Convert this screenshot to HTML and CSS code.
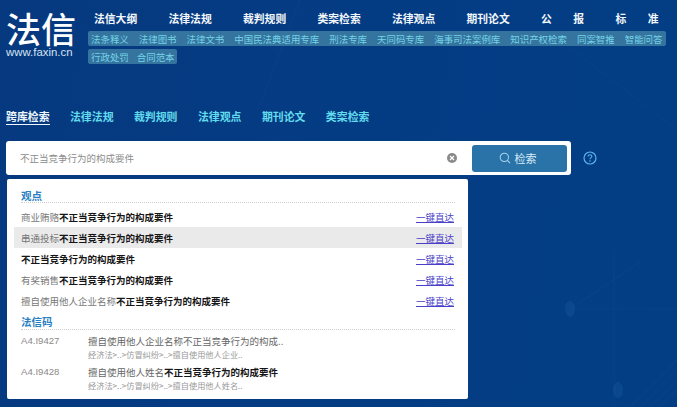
FILE: index.html
```html
<!DOCTYPE html>
<html lang="zh-CN">
<head>
<meta charset="utf-8">
<title>法信</title>
<link rel="stylesheet" href="styles.css">
</head>
<body>
<svg class="decor" width="677" height="407" viewBox="0 0 677 407" aria-hidden="true">
  <g stroke="#2f6fb0" stroke-opacity=".12" fill="none">
    <path d="M630 407L677 360M640 407L677 370M650 407L677 380M660 407L677 390"/>
    <path d="M570 309H677M570 309L640 262M614 250V407"/>
    <path d="M260 105L300 0M560 40L677 130"/>
  </g>
  <ellipse cx="570" cy="309" rx="5" ry="8" fill="#1a5da0" fill-opacity=".35"/>
  <ellipse cx="618" cy="390" rx="5" ry="8" fill="#1a5da0" fill-opacity=".35"/>
</svg>
<div class="page">
  <header class="header">
    <a class="logo">
      <span class="logo-name">法信</span>
      <span class="logo-url">www.faxin.cn</span>
    </a>
    <nav class="nav">
      <div class="main-nav">
        <a class="main-link">法信大纲</a>
        <a class="main-link">法律法规</a>
        <a class="main-link">裁判规则</a>
        <a class="main-link">类案检索</a>
        <a class="main-link">法律观点</a>
        <a class="main-link">期刊论文</a>
        <a class="main-link spread"><span>公</span><span>报</span></a>
        <a class="main-link spread"><span>标</span><span>准</span></a>
      </div>
      <div class="sub-row sub-row-wide">
        <a>法条释义</a><a>法律图书</a><a>法律文书</a><a>中国民法典适用专库</a><a>刑法专库</a><a>天同码专库</a><a>海事司法案例库</a><a>知识产权检索</a><a>同案智推</a><a>智能问答</a>
      </div>
      <div class="sub-row sub-row-short">
        <a>行政处罚</a><a>合同范本</a>
      </div>
    </nav>
  </header>

  <div class="tabs">
    <a class="tab tab-active">跨库检索</a>
    <a class="tab">法律法规</a>
    <a class="tab">裁判规则</a>
    <a class="tab">法律观点</a>
    <a class="tab">期刊论文</a>
    <a class="tab">类案检索</a>
  </div>

  <div class="search-line">
    <div class="search-box">
      <span class="search-text">不正当竞争行为的构成要件</span>
      <svg class="clear-icon" width="10" height="10" viewBox="0 0 10 10" aria-hidden="true">
        <circle cx="5" cy="5" r="5" fill="#8a8a8a"/>
        <path d="M3 3L7 7M7 3L3 7" stroke="#fff" stroke-width="1.2"/>
      </svg>
      <button class="search-btn">
        <svg width="12" height="12" viewBox="0 0 13 13" fill="none" aria-hidden="true">
          <circle cx="5.8" cy="5.8" r="4.5" stroke="#a9d3ea" stroke-width="1.1"/>
          <path d="M9 9L12 12" stroke="#a9d3ea" stroke-width="1.2"/>
        </svg>
        <span>检索</span>
      </button>
    </div>
    <svg class="help-icon" width="14" height="14" viewBox="0 0 14 14" fill="none" aria-hidden="true">
      <circle cx="7" cy="7" r="6" stroke="#5cb2f0" stroke-width="1.2"/>
      <path d="M5.1 5.5C5.1 4.4 6 3.8 7 3.8S8.9 4.4 8.9 5.4C8.9 6.6 7 6.7 7 8.2" stroke="#5cb2f0" stroke-width="1.1"/>
      <circle cx="7" cy="10" r=".8" fill="#5cb2f0"/>
    </svg>
  </div>

  <section class="dropdown">
    <h2 class="group-title">观点</h2>
    <ul class="view-list">
      <li class="view-row"><span>商业贿赂<b>不正当竞争行为的构成要件</b></span><a class="jump">一键直达</a></li>
      <li class="view-row view-row-hover"><span>串通投标<b>不正当竞争行为的构成要件</b></span><a class="jump">一键直达</a></li>
      <li class="view-row"><span><b>不正当竞争行为的构成要件</b></span><a class="jump">一键直达</a></li>
      <li class="view-row"><span>有奖销售<b>不正当竞争行为的构成要件</b></span><a class="jump">一键直达</a></li>
      <li class="view-row"><span>擅自使用他人企业名称<b>不正当竞争行为的构成要件</b></span><a class="jump">一键直达</a></li>
    </ul>
    <h2 class="group-title group-title-code">法信码</h2>
    <div class="code-row">
      <span class="code">A4.I9427</span>
      <div class="code-body">
        <div class="code-title">擅自使用他人企业名称不正当竞争行为的构成..</div>
        <div class="code-path">经济法&gt;..&gt;仿冒纠纷&gt;..&gt;擅自使用他人企业..</div>
      </div>
    </div>
    <div class="code-row">
      <span class="code">A4.I9428</span>
      <div class="code-body">
        <div class="code-title">擅自使用他人姓名<b>不正当竞争行为的构成要件</b></div>
        <div class="code-path">经济法&gt;..&gt;仿冒纠纷&gt;..&gt;擅自使用他人姓名..</div>
      </div>
    </div>
  </section>
</div>
</body>
</html>
```
FILE: styles.css
```css
* { box-sizing: border-box; }
html, body { margin: 0; padding: 0; }
body {
  width: 677px;
  height: 407px;
  overflow: hidden;
  position: relative;
  background: linear-gradient(100deg, #06397f 0%, #043c84 50%, #033e84 100%);
  font-family: "Noto Sans CJK SC", "Noto Sans", sans-serif;
}
a { text-decoration: none; }
.decor { position: absolute; left: 0; top: 0; }
.page { position: relative; padding: 0 0 0 6px; }

.header { display: flex; height: 105px; }
.logo { display: flex; flex-direction: column; width: 81px; padding-top: 9px; color: #fff; }
.logo-name { height: 37px; font-size: 35px; line-height: 37px; font-weight: 500; white-space: nowrap; }
.logo-url { font-family: "Liberation Sans", sans-serif; font-size: 11.4px; line-height: 12px; color: #d5e4f2; white-space: nowrap; }

.nav { display: flex; flex-direction: column; align-items: flex-start; }
.main-nav { display: flex; gap: 31.5px; padding: 10px 0 0 7px; height: 31px; }
.main-link { width: 43px; color: #f2f7fb; font-size: 10.8px; line-height: 16px; font-weight: 700; white-space: nowrap; }
.spread { display: flex; justify-content: space-between; }

.sub-row { display: flex; align-items: center; height: 15px; padding: 0 3px; margin-left: 1px; border-radius: 2px; background: #35749f; font-size: 9.45px; color: #74d3e6; white-space: nowrap; }
.sub-row-wide { width: 578px; gap: 10px; }
.sub-row-short { width: 89px; gap: 8px; margin-top: 3px; }

.tabs { display: flex; gap: 20.4px; height: 36px; padding-top: 3px; }
.tab { height: 17px; font-size: 10.9px; line-height: 16px; font-weight: 700; color: #63dbee; white-space: nowrap; }
.tab-active { color: #eef8fc; border-bottom: 1px solid #eef8fc; }

.search-line { display: flex; align-items: center; gap: 12px; }
.search-box { display: flex; align-items: center; width: 565px; height: 34px; padding: 0 4px 0 14px; background: #fff; border-radius: 3px; }
.search-text { flex: 1; font-size: 9.5px; color: #8c8c8c; white-space: nowrap; }
.clear-icon { margin-right: 15px; }
.search-btn { display: flex; align-items: center; justify-content: center; gap: 4px; width: 95px; height: 27px; padding: 0 4px 0 0; border: 0; border-radius: 3px; background: #2a73a8; color: #d9edf8; font-family: inherit; font-size: 11px; }

.dropdown { width: 461px; height: 220px; margin: 4px 0 0 1px; padding: 10px 13px 0 14px; background: #fff; border-radius: 2px; }
.group-title { margin: 0; height: 14px; font-size: 10.5px; line-height: 14px; font-weight: 700; color: #2a80c2; border-bottom: 1px dotted #cfcfcf; }
.group-title-code { height: 15px; margin-top: 4px; }
.view-list { list-style: none; margin: 3px 0 0; padding: 0; }
.view-row { display: flex; justify-content: space-between; align-items: center; height: 21px; margin: 0 -7px; padding: 0 8px 0 7px; font-size: 9.5px; color: #777; white-space: nowrap; }
.view-row b { color: #151515; font-weight: 700; }
.view-row-hover { background: #eaeaea; }
.jump { color: #4a3fc8; text-decoration: underline; }

.code-row { display: flex; height: 31px; padding-top: 4px; white-space: nowrap; }
.code { width: 67px; font-family: "Liberation Sans", sans-serif; font-size: 9.6px; line-height: 14px; color: #8a8a8a; }
.code-title { font-size: 9.5px; line-height: 15px; color: #666; }
.code-title b { color: #151515; font-weight: 700; }
.code-path { font-size: 8.2px; line-height: 11px; color: #999; }
```
